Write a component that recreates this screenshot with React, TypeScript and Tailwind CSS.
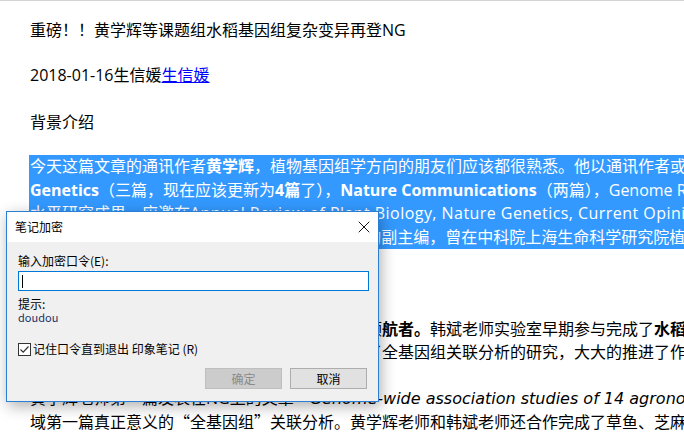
import { X } from 'lucide-react';

const bodyFont = "font-['Open_Sans','Noto_Sans_CJK_SC',sans-serif]";
const uiFont = "font-['Noto_Sans_CJK_SC','Open_Sans',sans-serif]";

// full-width curly quotes, as the CJK font draws them
function Q({ children }: { children: string }) {
  return <span className="font-['Noto_Sans_CJK_SC',sans-serif]">{children}</span>;
}

function EncryptDialog() {
  return (
    <div
      className={`absolute left-[6px] top-[210px] w-[373px] h-[191px] border border-[#2a7fd4] bg-[#f0f0f0] shadow-[2px_4px_14px_rgba(0,0,0,0.32)] flex flex-col ${uiFont}`}
    >
      {/* Title bar */}
      <div className="h-[30px] bg-white flex items-center justify-between pl-[8px] pr-[4px]">
        <span className="text-[12px] leading-[16px] text-black">笔记加密</span>
        <X className="w-[20px] h-[20px] text-black" strokeWidth={1.1} />
      </div>

      {/* Body */}
      <div className="flex flex-col pl-[11px] pr-[10px]">
        <div className="mt-[11px] text-[12px] leading-[16px] text-black">输入加密口令(E):</div>
        <div className="mt-[2px] w-[351px] h-[20px] bg-white border border-[#0078d7] flex items-center pl-[3px]">
          <span className="w-px h-[13px] bg-black" />
        </div>
        <div className="mt-[6px] text-[12px] leading-[14px] text-black">提示:</div>
        <div className="text-[11px] leading-[12px] text-[#1b2f66]">doudou</div>

        <div className="mt-[18px] flex items-center gap-[2px] text-[12px] leading-[16px] text-black">
          <span className="w-[13px] h-[13px] border border-[#333] bg-white flex items-center justify-center">
            <svg width="11" height="11" viewBox="0 0 11 11">
              <path d="M1.5 5.5 L4.2 8.2 L9.5 2.5" fill="none" stroke="#333" strokeWidth="1.2" />
            </svg>
          </span>
          <span>记住口令直到退出 印象笔记 (R)</span>
        </div>

        <div className="mt-[11px] flex justify-end gap-[8px] pr-[1px]">
          <button className="w-[77px] h-[21px] bg-[#cccccc] border border-[#bfbfbf] text-[12px] leading-[16px] text-[#8a8a8a]">
            确定
          </button>
          <button className="w-[77px] h-[21px] bg-[#e1e1e1] border border-[#adadad] text-[12px] leading-[16px] text-black">
            取消
          </button>
        </div>
      </div>
    </div>
  );
}

export default function App() {
  return (
    <div className={`relative w-[684px] h-[433px] overflow-hidden bg-white border-t border-[#d4d4d4] ${bodyFont}`}>
      <div className="pl-[30px] pt-[17px] text-[16px] text-black whitespace-nowrap">
        <p className="leading-[24px]">重磅！！黄学辉等课题组水稻基因组复杂变异再登NG</p>
        <p className="mt-[21px] leading-[24px]">
          2018-01-16生信媛<span className="text-[#0000ff] underline">生信媛</span>
        </p>
        <p className="mt-[23px] leading-[24px]">背景介绍</p>

        {/* Selected paragraph */}
        <div className="mt-[21px] -ml-px pl-px bg-[#3399ff] text-white leading-[23.5px]">
          <div>
            今天这篇文章的通讯作者<b>黄学辉</b>，植物基因组学方向的朋友们应该都很熟悉。他以通讯作者或共同通讯作者在Nature
          </div>
          <div>
            <b>Genetics</b>（三篇，现在应该更新为<b>4篇</b>了），<b>Nature Communications</b>（两篇），Genome Research等杂志发表
          </div>
          <div>
            水平研究成果，应邀在
            <span className="tracking-[0.45px]">Annual Review of Plant Biology, Nature Genetics, Current Opinion in Plant Biology</span>
            等发表
          </div>
          <div>综述，现担任国际知名期刊Plant Journal等杂志的副主编，曾在中科院上海生命科学研究院植物生理生态研究所工作。</div>
        </div>

        <p className="mt-[22px] leading-[23px]">团队介绍</p>
        <div className="mt-[24px] leading-[23px]">
          <div>
            黄学辉的博士导师韩斌院士是水稻基因组研究的领<b>航者。</b>韩斌老师实验室早期参与完成了<b>水稻基因组测序工</b>
          </div>
          <div>作，并利用新一代高通量测序技术在水稻中开展了全基因组关联分析的研究，大大的推进了作物遗传学研究。</div>
        </div>
        <div className="mt-[22px] leading-[23px]">
          <div>
            黄学辉老师第一篇发表在NG上的文章<Q>“</Q>
            <i className="font-['DejaVu_Sans',sans-serif]">
              Genome-wide association studies of 14 agronomic traits in rice landraces
            </i>
            <Q>”</Q>是该领
          </div>
          <div>
            域第一篇真正意义的<Q>“</Q>全基因组<Q>”</Q>关联分析。黄学辉老师和韩斌老师还合作完成了草鱼、芝麻等基因组研究。
          </div>
        </div>
      </div>

      <EncryptDialog />
    </div>
  );
}
